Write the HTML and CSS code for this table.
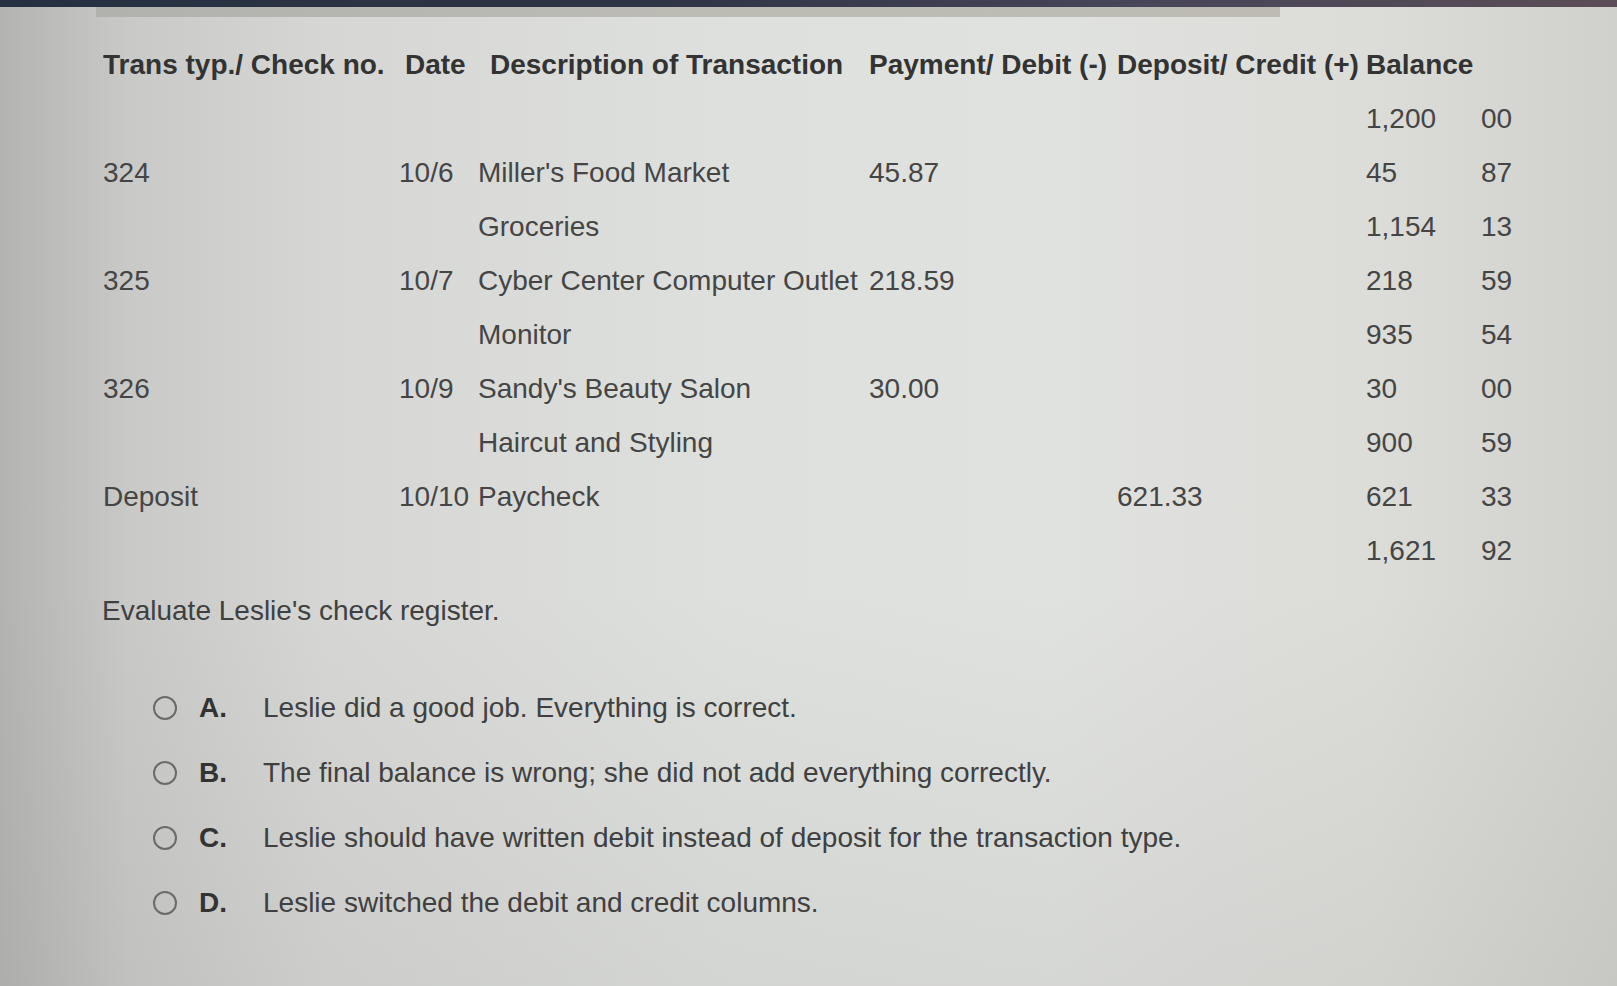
FILE: index.html
```html
<!DOCTYPE html>
<html lang="en">
<head>
<meta charset="utf-8">
<title>Check Register</title>
<link rel="stylesheet" href="styles.css">
</head>
<body>
<div class="topbar"></div>
<div class="strip"></div>
<main class="page">
  <div class="register">
    <div class="h c1">Trans typ./ Check no.</div>
    <div class="h c2">Date</div>
    <div class="h c3">Description of Transaction</div>
    <div class="h c4">Payment/ Debit (-)</div>
    <div class="h c5">Deposit/ Credit (+)</div>
    <div class="h c6">Balance</div>
    <div class="h c7"></div>

    <div></div><div></div><div></div><div></div><div></div><div>1,200</div><div>00</div>

    <div>324</div><div>10/6</div><div>Miller's Food Market</div><div>45.87</div><div></div><div>45</div><div>87</div>
    <div></div><div></div><div>Groceries</div><div></div><div></div><div>1,154</div><div>13</div>

    <div>325</div><div>10/7</div><div>Cyber Center Computer Outlet</div><div>218.59</div><div></div><div>218</div><div>59</div>
    <div></div><div></div><div>Monitor</div><div></div><div></div><div>935</div><div>54</div>

    <div>326</div><div>10/9</div><div>Sandy's Beauty Salon</div><div>30.00</div><div></div><div>30</div><div>00</div>
    <div></div><div></div><div>Haircut and Styling</div><div></div><div></div><div>900</div><div>59</div>

    <div>Deposit</div><div>10/10</div><div>Paycheck</div><div></div><div>621.33</div><div>621</div><div>33</div>
    <div></div><div></div><div></div><div></div><div></div><div>1,621</div><div>92</div>
  </div>

  <p class="question">Evaluate Leslie's check register.</p>

  <ul class="options">
    <li class="option"><span class="radio"></span><span class="letter">A.</span><span class="text">Leslie did a good job. Everything is correct.</span></li>
    <li class="option"><span class="radio"></span><span class="letter">B.</span><span class="text">The final balance is wrong; she did not add everything correctly.</span></li>
    <li class="option"><span class="radio"></span><span class="letter">C.</span><span class="text">Leslie should have written debit instead of deposit for the transaction type.</span></li>
    <li class="option"><span class="radio"></span><span class="letter">D.</span><span class="text">Leslie switched the debit and credit columns.</span></li>
  </ul>
</main>
</body>
</html>
```

FILE: styles.css
```css
html, body {
  margin: 0;
  padding: 0;
  height: 100%;
}

body {
  font-family: "Liberation Sans", Arial, sans-serif;
  color: #454545;
  background:
    linear-gradient(180deg, rgba(255,255,255,0) 0%, rgba(255,255,255,0) 60%, rgba(120,120,120,0.10) 100%),
    linear-gradient(90deg, #b3b4b2 0%, #c9cac8 8%, #d6d7d4 20%, #dee0dd 45%, #e0e2df 65%, #dcdcd8 85%, #d0d0cc 100%);
  overflow: hidden;
}

.topbar {
  height: 7px;
  background: linear-gradient(90deg, #263041 0%, #2e3545 40%, #474558 70%, #5b4d57 100%);
}

.strip {
  height: 10px;
  margin-left: 96px;
  width: 1184px;
  background: linear-gradient(90deg, #b1b2ad, #bcbcb5 50%, #bdbbb4);
}

.page {
  padding: 21px 0 0 0;
}

.register {
  display: grid;
  grid-template-columns: 296px 79px 391px 248px 249px 115px 60px;
  grid-auto-rows: 54px;
  align-items: center;
  padding-left: 103px;
  font-size: 28px;
  white-space: nowrap;
}

.h {
  font-weight: bold;
  color: #333;
}

.h.c2 { padding-left: 6px; }
.h.c3 { padding-left: 12px; }

.question {
  margin: 16px 0 0 102px;
  font-size: 28px;
  line-height: 34px;
  color: #404040;
}

.options {
  list-style: none;
  margin: 47px 0 0 0;
  padding: 0 0 0 153px;
}

.option {
  display: flex;
  align-items: center;
  height: 65px;
  font-size: 28px;
  color: #404040;
}

.radio {
  width: 20px;
  height: 20px;
  border: 2px solid #6a6a6a;
  border-radius: 50%;
  flex: none;
}

.letter {
  margin-left: 22px;
  width: 64px;
  font-weight: bold;
  color: #333;
}

.text {
  white-space: nowrap;
}
```
